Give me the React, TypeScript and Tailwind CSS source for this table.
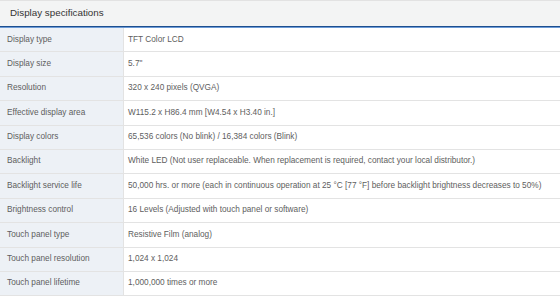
const specs: [string, string][] = [
  ['Display type', 'TFT Color LCD'],
  ['Display size', '5.7"'],
  ['Resolution', '320 x 240 pixels (QVGA)'],
  ['Effective display area', 'W115.2 x H86.4 mm [W4.54 x H3.40 in.]'],
  ['Display colors', '65,536 colors (No blink) / 16,384 colors (Blink)'],
  ['Backlight', 'White LED (Not user replaceable. When replacement is required, contact your local distributor.)'],
  ['Backlight service life', '50,000 hrs. or more (each in continuous operation at 25 °C [77 °F] before backlight brightness decreases to 50%)'],
  ['Brightness control', '16 Levels (Adjusted with touch panel or software)'],
  ['Touch panel type', 'Resistive Film (analog)'],
  ['Touch panel resolution', '1,024 x 1,024'],
  ['Touch panel lifetime', '1,000,000 times or more'],
];

export default function App() {
  return (
    <div className="w-[560px] h-[296px] overflow-hidden bg-white font-['Liberation_Sans',Arial,sans-serif]">
      <div className="border-t border-[#e2e2e2] bg-[#f3f4f4] h-[26px] flex items-center px-[10px] text-[9.8px] text-[#333]">
        Display specifications
      </div>
      <div className="h-px bg-[#1d4f8f]" />
      <div className="h-px bg-[#6d9bd6]" />
      {specs.map(([k, v]) => (
        <div key={k} className="flex h-[24.4px] border-b border-[#e3e3e3] text-[8.25px] text-[#5e5e5e]">
          <div className="w-[124px] shrink-0 bg-[#edf1f6] border-r border-[#e3e3e3] flex items-center pl-[7px]">{k}</div>
          <div className="flex-1 flex items-center pl-[4px] whitespace-nowrap">{v}</div>
        </div>
      ))}
    </div>
  );
}
